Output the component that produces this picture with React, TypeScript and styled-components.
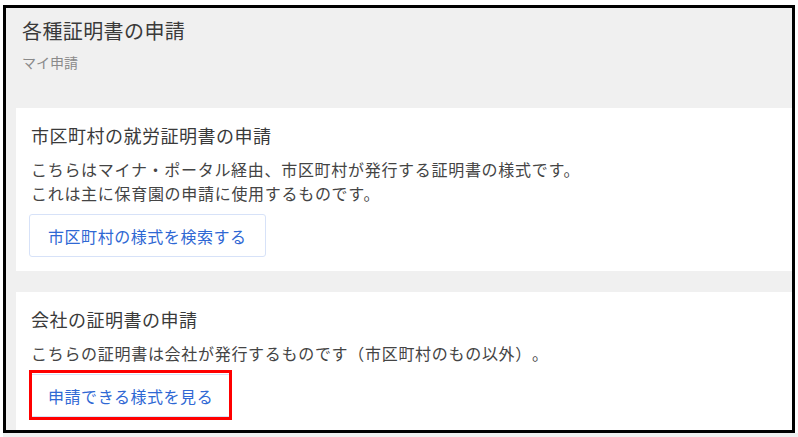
import React from 'react'
import styled, { createGlobalStyle } from 'styled-components'

const GlobalStyle = createGlobalStyle`
  html, body {
    margin: 0;
    padding: 0;
    background: #fff;
  }
  body {
    font-family: 'Noto Sans CJK JP', 'Noto Sans', sans-serif;
    text-spacing-trim: space-all;
  }
`

type Certificate = {
  title: string
  lines: string[]
  action: string
  highlighted?: boolean
}

const CERTIFICATES: Certificate[] = [
  {
    title: '市区町村の就労証明書の申請',
    lines: [
      'こちらはマイナ・ポータル経由、市区町村が発行する証明書の様式です。',
      'これは主に保育園の申請に使用するものです。',
    ],
    action: '市区町村の様式を検索する',
  },
  {
    title: '会社の証明書の申請',
    lines: ['こちらの証明書は会社が発行するものです（市区町村のもの以外）。'],
    action: '申請できる様式を見る',
    highlighted: true,
  },
]

export default function App() {
  return (
    <>
      <GlobalStyle />
      <Frame>
        <Header>
          <PageTitle>各種証明書の申請</PageTitle>
          <Breadcrumb>マイ申請</Breadcrumb>
        </Header>
        <CardList>
          {CERTIFICATES.map((c) => (
            <Card key={c.title}>
              <CardTitle>{c.title}</CardTitle>
              <CardText>
                {c.lines.map((line) => (
                  <div key={line}>{line}</div>
                ))}
              </CardText>
              <ActionButton $highlighted={c.highlighted}>{c.action}</ActionButton>
            </Card>
          ))}
        </CardList>
      </Frame>
      <PageEdge />
    </>
  )
}

const Frame = styled.div`
  box-sizing: border-box;
  margin: 5px 0 0 3px;
  width: 792px;
  height: 428px;
  border: 3px solid #000;
  background: #f0f0f0;
  overflow: hidden;
`

const PageEdge = styled.div`
  margin-left: 3px;
  height: 4px;
  background: #f0f0f0;
`

const Header = styled.div`
  padding: 13px 0 0 16px;
  height: 100px;
  box-sizing: border-box;
`

const PageTitle = styled.h1`
  margin: 0;
  font-size: 20px;
  line-height: 20px;
  font-weight: 400;
  color: #3a3a3a;
  letter-spacing: 0.4px;
`

const Breadcrumb = styled.div`
  margin-top: 14px;
  font-size: 14px;
  line-height: 14px;
  color: #8a8a8a;
`

const CardList = styled.div`
  display: flex;
  flex-direction: column;
  gap: 21px;
  margin-left: 10px;
`

const Card = styled.section`
  background: #fff;
  padding: 18px 15px 14px;
`

const CardTitle = styled.h2`
  margin: 0;
  font-size: 18px;
  line-height: 18px;
  font-weight: 400;
  color: #3a3a3a;
  letter-spacing: 0.5px;
`

const CardText = styled.div`
  margin-top: 13px;
  font-size: 16px;
  line-height: 24px;
  color: #444;
  letter-spacing: 0.7px;
`

const ActionButton = styled.button<{ $highlighted?: boolean }>`
  position: relative;
  display: inline-flex;
  align-items: center;
  margin: 9px 0 0 -2px;
  height: 43px;
  padding: 0 18px;
  border: 1px solid #d7e2f8;
  border-radius: 3px;
  background: #fff;
  color: #2f68d4;
  font-family: inherit;
  font-size: 16px;
  letter-spacing: 0.55px;
  cursor: pointer;

  ${({ $highlighted }) =>
    $highlighted &&
    `
    &::after {
      content: '';
      position: absolute;
      top: -5px;
      left: -1px;
      right: -1px;
      bottom: -4px;
      border: 3px solid #f00;
    }
  `}
`
